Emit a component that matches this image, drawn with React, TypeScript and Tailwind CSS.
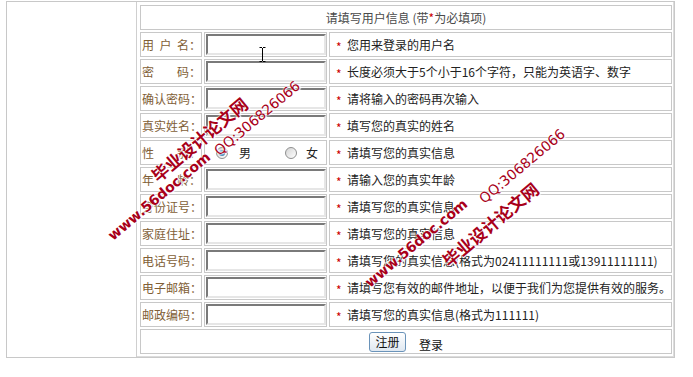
import React from 'react';

const rows = [
  { label: ['用', '户', '名'], hint: '您用来登录的用户名', type: 'text' },
  { label: ['密', '码'], hint: '长度必须大于5个小于16个字符，只能为英语字、数字', type: 'password' },
  { label: ['确', '认', '密', '码'], hint: '请将输入的密码再次输入', type: 'password' },
  { label: ['真', '实', '姓', '名'], hint: '填写您的真实的姓名', type: 'text' },
  { label: ['性', '别'], hint: '请填写您的真实信息', type: 'radio' },
  { label: ['年', '龄'], hint: '请输入您的真实年龄', type: 'text' },
  { label: ['身', '份', '证', '号'], hint: '请填写您的真实信息', type: 'text' },
  { label: ['家', '庭', '住', '址'], hint: '请填写您的真实信息', type: 'text' },
  { label: ['电', '话', '号', '码'], hint: '请填写您的真实信息(格式为02411111111或13911111111)', type: 'text' },
  { label: ['电', '子', '邮', '箱'], hint: '请填写您有效的邮件地址，以便于我们为您提供有效的服务。', type: 'text' },
  { label: ['邮', '政', '编', '码'], hint: '请填写您的真实信息(格式为111111)', type: 'text' },
];

// watermark lines, placed by their centre point
const marks = [
  { text: '毕业设计论文网', x: 199, y: 139, cls: "font-['Noto_Sans_CJK_SC',sans-serif] font-bold text-[17px]" },
  { text: 'www.56doc.com', x: 159, y: 196, cls: "font-['DejaVu_Sans',sans-serif] font-bold text-[14px]" },
  { text: 'QQ:306826066', x: 257, y: 118, cls: "font-['DejaVu_Sans',sans-serif] text-[14px]" },
  { text: 'www.56doc.com', x: 416, y: 243, cls: "font-['DejaVu_Sans',sans-serif] font-bold text-[14px]" },
  { text: '毕业设计论文网', x: 490, y: 224, cls: "font-['Noto_Sans_CJK_SC',sans-serif] font-bold text-[17px]" },
  { text: 'QQ:306826066', x: 522, y: 166, cls: "font-['DejaVu_Sans',sans-serif] text-[14px]" },
];

function Radio({ checked }: { checked?: boolean }) {
  return (
    <span className="w-[12px] h-[12px] rounded-full border border-[#8e8f8f] bg-[linear-gradient(135deg,#d4d4d4,#ffffff)] flex items-center justify-center shrink-0">
      {checked && (
        <span className="w-[6px] h-[6px] rounded-full bg-[radial-gradient(circle_at_35%_35%,#a8d8f5,#1a5f96)]" />
      )}
    </span>
  );
}

export default function App() {
  return (
    <div className="relative w-[693px] h-[377px] overflow-hidden bg-white font-['Noto_Sans_CJK_SC','Noto_Sans',sans-serif] text-[12px] leading-none">
      <div className="ml-[6px] mt-[1px] w-[669px] h-[357px] border border-[#c8c8c8] flex">
        <div className="w-[130px] border-r border-[#cfcfcf]" />
        <div className="flex-1 pl-[3px] pt-[3px] pr-[1px] pb-[2px] border-r border-b border-[#dcdcdc]">
          <div className="grid grid-cols-[62px_123px_343px] auto-rows-[25px] gap-[2px]">
            <div className="col-span-3 border border-[#c8c8c8] flex items-center justify-center text-[#4a4a4a]">
              请填写用户信息 (带<span className="text-[#c00]">*</span>为必填项)
            </div>

            {rows.map((row, i) => (
              <React.Fragment key={i}>
                <div className="border border-[#c8c8c8] flex items-center pl-[1px] text-[#7f5e36]">
                  <span className="w-[48px] flex justify-between">
                    {row.label.map((c, j) => (
                      <span key={j}>{c}</span>
                    ))}
                  </span>
                  <span>：</span>
                </div>
                <div className="border border-[#c8c8c8] p-[1px] flex items-center">
                  {row.type === 'radio' ? (
                    <div className="flex items-center text-[#222]">
                      <span className="ml-[10px]">
                        <Radio checked />
                      </span>
                      <span className="ml-[11px]">男</span>
                      <span className="ml-[34px]">
                        <Radio />
                      </span>
                      <span className="ml-[9px]">女</span>
                    </div>
                  ) : (
                    <input
                      type={row.type}
                      className="w-[120px] h-[21px] border-2 border-t-[#7a7a7a] border-l-[#7a7a7a] border-r-[#e6e6e6] border-b-[#e6e6e6] bg-white outline-none"
                    />
                  )}
                </div>
                <div className="border border-[#c8c8c8] flex items-center pl-[6px] text-[#222] whitespace-nowrap">
                  <span className="w-[11px] text-[#c00] translate-y-[2px]">*</span>
                  <span>{row.hint}</span>
                </div>
              </React.Fragment>
            ))}

            <div className="col-span-3 border border-[#c8c8c8] flex items-center justify-center">
              <button className="w-[37px] h-[20px] rounded-[3px] border border-[#6a93b9] bg-[linear-gradient(#ffffff,#dfe8f1)] text-[#111] text-[12px] flex items-center justify-center">
                注册
              </button>
              <span className="ml-[13px] mt-[6px] text-[#111]">登录</span>
            </div>
          </div>
        </div>
      </div>

      {/* text cursor left over in the capture */}
      <svg className="absolute left-[259px] top-[47px]" width="7" height="15" viewBox="0 0 7 15">
        <path d="M0.5 0.5h2.5M4 0.5h2.5M3.5 1v13M0.5 14.5h2.5M4 14.5h2.5" stroke="#000" strokeWidth="1" fill="none" />
      </svg>

      {marks.map((m, i) => (
        <span
          key={i}
          className={`absolute whitespace-nowrap -translate-x-1/2 -translate-y-1/2 rotate-[-40deg] text-[#a8001a] [text-shadow:0_0_1px_#fff,0_0_2px_#fff,1px_1px_1px_#fff] ${m.cls}`}
          style={{ left: m.x, top: m.y }}
        >
          {m.text}
        </span>
      ))}
    </div>
  );
}
